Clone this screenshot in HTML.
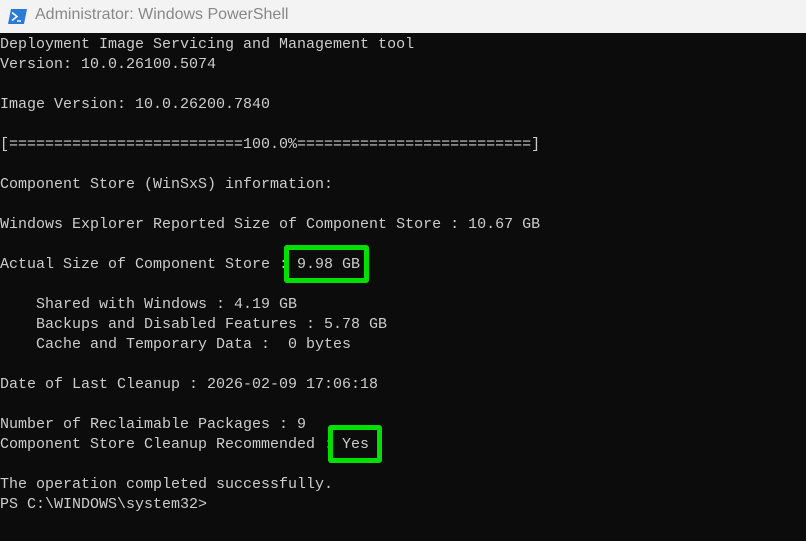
<!DOCTYPE html>
<html><head><meta charset="utf-8"><style>
html,body{margin:0;padding:0;width:806px;height:541px;overflow:hidden;background:#0c0c0c}
.title{position:absolute;left:0;top:0;width:806px;height:33px;background:#f3f3f3}
.title span{position:absolute;left:35px;top:6px;font:16px "Liberation Sans",sans-serif;color:#888}
.term{position:absolute;left:0;top:35px;margin:0;font:15px/20px "Liberation Mono",monospace;color:#cccccc;white-space:pre}
.box{position:absolute;border:5px solid #00e000;border-radius:3px;box-sizing:border-box}
</style></head><body>
<div class="title">
<svg style="position:absolute;left:8px;top:9px" width="19" height="15" viewBox="0 0 19 15"><polygon points="3,0 19,0 16,15 0,15" fill="#2b7ad8"/><polyline points="4,3.5 9,7.5 4,11.5" fill="none" stroke="#fff" stroke-width="1.6"/><line x1="9" y1="12" x2="13" y2="12" stroke="#fff" stroke-width="1.4"/></svg>
<span>Administrator: Windows PowerShell</span></div>
<pre class="term">Deployment Image Servicing and Management tool
Version: 10.0.26100.5074

Image Version: 10.0.26200.7840

[==========================100.0%==========================]

Component Store (WinSxS) information:

Windows Explorer Reported Size of Component Store : 10.67 GB

Actual Size of Component Store : 9.98 GB

    Shared with Windows : 4.19 GB
    Backups and Disabled Features : 5.78 GB
    Cache and Temporary Data :  0 bytes

Date of Last Cleanup : 2026-02-09 17:06:18

Number of Reclaimable Packages : 9
Component Store Cleanup Recommended : Yes

The operation completed successfully.
PS C:\WINDOWS\system32&gt;</pre>
<div class="box" style="left:284px;top:245px;width:85px;height:38px"></div>
<div class="box" style="left:328px;top:425px;width:54px;height:38px"></div>
</body></html>
